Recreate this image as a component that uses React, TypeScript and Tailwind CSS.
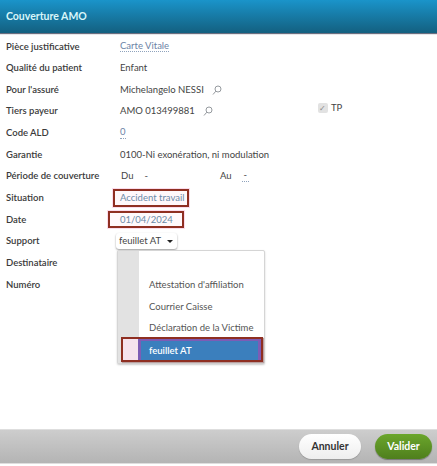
import type { ReactNode } from "react";

function SearchIcon() {
  return (
    <svg width="10" height="10" viewBox="0 0 10 10" fill="none" stroke="#8a8f94" strokeWidth="0.9" className="ml-[8px]">
      <circle cx="6" cy="4" r="3" />
      <path d="M3.8 6.2 1 9.5" />
    </svg>
  );
}

function Row({ label, children }: { label: string; children?: ReactNode }) {
  return (
    <div className="flex h-[21.65px] items-center">
      <div className="w-[120px] shrink-0 pl-[6px] font-semibold text-[#3a3a3a]">{label}</div>
      <div className="flex min-w-0 flex-1 items-center text-[#444]">{children}</div>
    </div>
  );
}

const options = ["Attestation d'affiliation", "Courrier Caisse", "Déclaration de la Victime"];

export default function App() {
  return (
    <div className="flex h-[466px] w-[437px] flex-col overflow-hidden bg-white font-['Lato',sans-serif] text-[9.5px] leading-none">
      <header className="flex h-[33px] shrink-0 items-center bg-gradient-to-b from-[#1a94ca] to-[#136080] pl-[6px] text-[10.5px] font-bold text-[#d8f6fa] shadow-[0_1px_1px_#6b6f80]">
        Couverture AMO
      </header>

      <main className="relative flex-1 pt-[2.5px]">
        <Row label="Pièce justificative">
          <span className="border-b border-dotted border-[#8fa3bd] pb-px text-[#6c83a6]">Carte Vitale</span>
        </Row>
        <Row label="Qualité du patient">Enfant</Row>
        <Row label="Pour l'assuré">
          Michelangelo NESSI
          <SearchIcon />
        </Row>
        <Row label="Tiers payeur">
          AMO 013499881
          <SearchIcon />
          <span className="ml-[105px] flex -translate-y-[3px] items-center gap-[3px]">
            <span className="flex h-[10px] w-[10px] items-center justify-center rounded-[2px] bg-[#e2e2e2] text-[8px] text-[#888]">✓</span>
            TP
          </span>
        </Row>
        <Row label="Code ALD">
          <span className="border-b border-dotted border-[#8fa3bd] pb-px text-[#6c83a6]">0</span>
        </Row>
        <Row label="Garantie">0100-Ni exonération, ni modulation</Row>
        <Row label="Période de couverture">
          <span className="ml-[1px]">Du</span>
          <span className="ml-[11px]">-</span>
          <span className="ml-[72px]">Au</span>
          <span className="ml-[10px] border-b border-dotted border-[#8fa3bd] px-[2px] pb-px">-</span>
        </Row>
        <Row label="Situation">
          <span className="-ml-[7px] flex h-[18px] w-[76px] items-center border-2 border-[#8f2f22] bg-[#fff8fb] pl-[5px] text-[#6b8aa8] shadow-[0_0_0_1px_#fbdcec]">
            Accident travail
          </span>
        </Row>
        <Row label="Date">
          <span className="-ml-[12px] flex h-[17px] w-[76px] items-center border-2 border-[#8f2f22] bg-[#fff8fb] pl-[10px] text-[#6b8aa8] shadow-[0_0_0_1px_#fbdcec]">
            01/04/2024
          </span>
        </Row>
        <Row label="Support">
          <span className="-ml-[4px] flex h-[16px] w-[61px] items-center gap-[6px] rounded-[3px] bg-white px-[3px] text-[#444] shadow-[0_1px_2px_#999]">
            feuillet AT
            <span className="h-0 w-0 border-x-[3px] border-t-[3px] border-x-transparent border-t-[#222]" />
          </span>
        </Row>
        <Row label="Destinataire" />
        <Row label="Numéro" />

        <div className="absolute left-[117px] top-[217px] flex h-[114px] w-[148px] flex-col justify-end rounded-[2px] border border-[#d5d5d5] bg-white pb-[1px] shadow-[0_1px_2px_#ccc]">
          <div className="absolute inset-y-0 left-0 w-[21px] bg-[#e2e2e2]" />
          {options.map((option) => (
            <div key={option} className="relative flex h-[21.65px] items-center whitespace-nowrap pl-[31px] text-[#555]">
              {option}
            </div>
          ))}
          <div className="relative ml-[3px] mr-[1px] -mt-[2px] flex h-[25px] items-stretch border-2 border-[#8f2f22] shadow-[1px_1px_1px_#b9a0a0]">
            <div className="w-[15px] bg-[#f6e3ee]" />
            <div className="flex flex-1 items-center border-x-[3px] border-t-[2px] border-x-[#7d5cb5] border-t-[#7d5cb5] bg-[#3b7fbd] pl-[8px] font-semibold text-white">
              feuillet AT
            </div>
          </div>
        </div>
      </main>

      <footer className="mb-[2px] flex h-[35px] shrink-0 items-center justify-end gap-[14px] border-y border-[#dedede] bg-gradient-to-b from-[#cdcdcd] to-[#b4b4b4] pr-[5px]">
        <button className="h-[25px] w-[62px] rounded-full bg-gradient-to-b from-white to-[#eee] text-[10.5px] font-bold text-[#333] shadow-[0_1px_1px_#999]">
          Annuler
        </button>
        <button className="h-[25px] w-[57px] rounded-full bg-gradient-to-b from-[#6ba62c] to-[#4f7f1d] text-[10.5px] font-bold text-white shadow-[0_1px_1px_#777]">
          Valider
        </button>
      </footer>
    </div>
  );
}
